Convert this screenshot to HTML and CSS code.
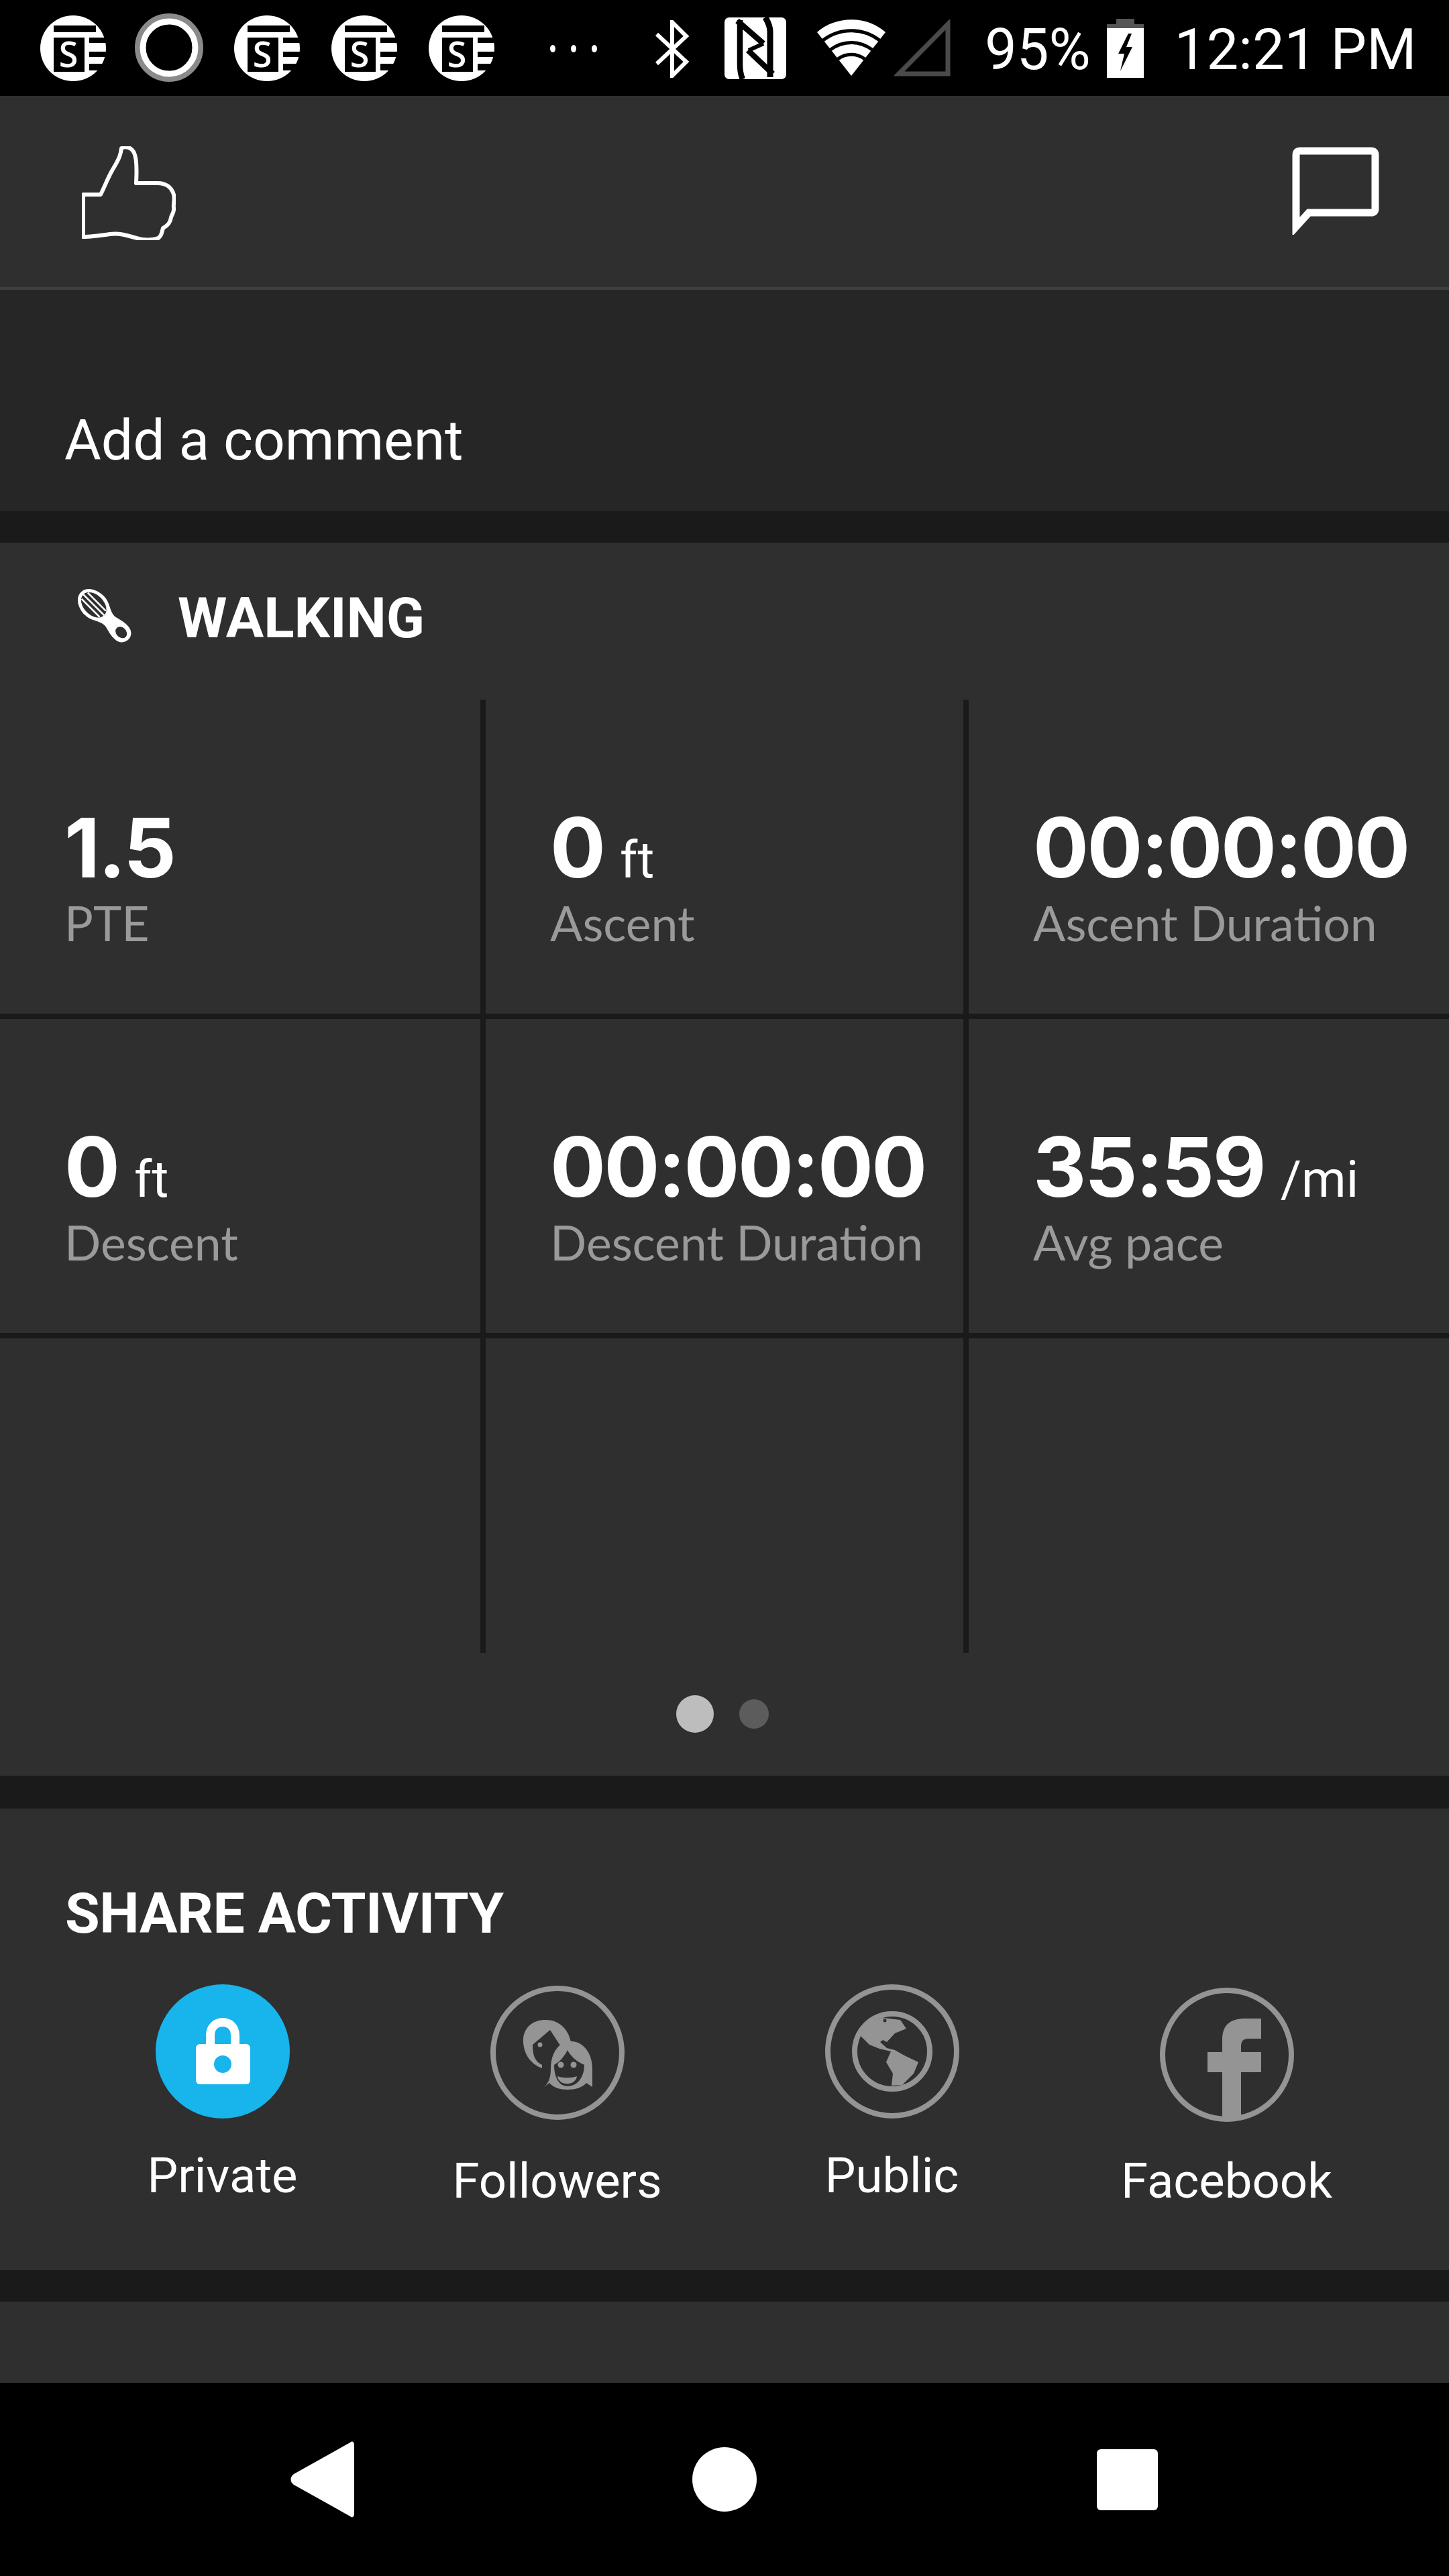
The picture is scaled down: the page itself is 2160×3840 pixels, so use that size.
FILE: index.html
```html
<!DOCTYPE html>
<html lang="en">
<head>
  <meta charset="UTF-8">
  <title>Activity</title>
  <link rel="stylesheet" href="styles.css">
</head>
<body>
  <div class="phone">
    <div class="statusbar">
      <svg class="st-icon st-first" viewBox="0 0 98 98"><use href="#se"/></svg>
      <svg class="st-ring" viewBox="0 0 102 102"><circle cx="51" cy="51" r="47" fill="none" stroke="#8a8a8a" stroke-width="8"/><circle cx="51" cy="51" r="39" fill="none" stroke="#fff" stroke-width="9"/></svg>
      <svg class="st-icon st-a" viewBox="0 0 98 98"><use href="#se"/></svg>
      <svg class="st-icon st-b" viewBox="0 0 98 98"><use href="#se"/></svg>
      <svg class="st-icon st-b" viewBox="0 0 98 98"><use href="#se"/></svg>
      <div class="st-dots"><span></span><span></span><span></span></div>
      <svg class="st-bt" viewBox="0 0 52 86"><path d="M2 21 L46 62 L25 83 V3 L46 24 L2 65" fill="none" stroke="#fff" stroke-width="6"/></svg>
      <svg class="st-nfc" viewBox="0 0 92 92">
        <rect width="92" height="92" rx="7" fill="#fff"/>
        <g fill="none" stroke="#000">
          <path d="M23 4 V70 C23 78 24 85 27 92" stroke-width="8.5"/>
          <path d="M19 5 L58 39" stroke-width="8.5"/>
          <path d="M36 49 L58 39" stroke-width="6"/>
          <path d="M35 49 L72 84" stroke-width="8.5"/>
          <path d="M68 89 V21 C68 13 65 7 61 0" stroke-width="9"/>
        </g>
      </svg>
      <svg class="st-wifi" viewBox="0 0 102 84"><path d="M0 19 C28 -6 74 -6 102 19 L51 84 Z" fill="#fff"/><path d="M9 31 C34 12 68 12 93 31 M20 45 C39 31 63 31 82 45 M31 59 C43 50 59 50 71 59" fill="none" stroke="#000" stroke-width="5"/></svg>
      <svg class="st-signal" viewBox="0 0 84 85"><path d="M80 7 V81 H7 Z" fill="none" stroke="#4a4a4a" stroke-width="7"/></svg>
      <span class="st-pct">95%</span>
      <svg class="st-batt" viewBox="0 0 55 88"><rect x="14" width="27" height="12" fill="#555"/><rect y="8" width="55" height="8" fill="#555"/><rect y="14" width="55" height="74" fill="#fff"/><path d="M32 22 L17 52 H26 L20 78 L38 42 H29 L37 22 Z" fill="#000"/></svg>
      <span class="st-time">12:21 PM</span>
    </div>

    <div class="actions">
      <svg class="thumb" viewBox="0 0 140 140"><path d="M2 72 H28 C36 56 40 44 47 33 C56 18 58 12 59 3 C66 -1 74 2 78 10 C82 18 82 36 81 55 H113 C126 55 134 62 137 72 C139 80 136 86 137 92 C138 98 134 102 133 106 C132 114 128 118 121 122 C119 130 118 134 114 137 C104 140 92 140 82 137 C68 133 56 129 42 131 C28 133 14 135 2 135 Z" fill="none" stroke="#fff" stroke-width="6" stroke-linejoin="round"/></svg>
      <svg class="bubble" viewBox="0 0 132 132"><path d="M7 120 V13 C7 9 9 7 13 7 H119 C123 7 125 9 125 13 V93 C125 97 123 99 119 99 H26 Z" fill="none" stroke="#fff" stroke-width="11"/></svg>
    </div>

    <div class="comment">Add a comment</div>

    <section class="card stats">
      <div class="activity">
        <svg class="foot" viewBox="0 0 72 72">
          <g transform="rotate(-45 36 36)">
            <path d="M36 -14 C49 -14 56 1 56 14 C56 28 47 34 46 46 C46 52 50 58 50 70 C50 80 44 86 36 86 C28 86 22 80 22 70 C22 58 26 52 26 46 C25 34 16 28 16 14 C16 1 23 -14 36 -14 Z" fill="#fff"/>
            <ellipse cx="36" cy="13" rx="15" ry="22" fill="#2f2f2f"/>
            <path d="M29.5 -6 V32 M36 -9 V35 M42.5 -6 V32" stroke="#fff" stroke-width="2.6" fill="none"/>
            <ellipse cx="36" cy="71" rx="7.5" ry="9.5" fill="#2f2f2f"/>
          </g>
        </svg>
        <span>WALKING</span>
      </div>
      <div class="grid">
        <div class="cell"><div class="val">1.5</div><div class="lbl">PTE</div></div>
        <div class="cell"><div class="val">0 <small>ft</small></div><div class="lbl">Ascent</div></div>
        <div class="cell cell-last"><div class="val">00:00:00</div><div class="lbl">Ascent Duration</div></div>
        <div class="cell"><div class="val">0 <small>ft</small></div><div class="lbl">Descent</div></div>
        <div class="cell"><div class="val">00:00:00</div><div class="lbl">Descent Duration</div></div>
        <div class="cell cell-last"><div class="val">35:59 <small>/mi</small></div><div class="lbl">Avg pace</div></div>
        <div class="cell cell-bottom"></div>
        <div class="cell cell-bottom"></div>
        <div class="cell cell-last cell-bottom"></div>
      </div>
      <div class="pager"><span class="dot dot-on"></span><span class="dot"></span></div>
    </section>

    <section class="card share">
      <h2>SHARE ACTIVITY</h2>
      <div class="share-row">
        <div class="share-item">
          <svg class="share-icon" viewBox="0 0 200 200">
            <circle cx="100" cy="100" r="100" fill="#18b4ec"/>
            <path d="M81.5 92 V76 C81.5 50 118.5 50 118.5 76 V92" fill="none" stroke="#fff" stroke-width="13"/>
            <rect x="60" y="89" width="81" height="60" rx="6" fill="#fff"/>
            <circle cx="100" cy="119" r="13" fill="#18b4ec"/>
          </svg>
          <div class="share-label">Private</div>
        </div>
        <div class="share-item share-item-low">
          <svg class="share-icon" viewBox="0 0 200 200">
            <circle cx="100" cy="100" r="96" fill="none" stroke="#949494" stroke-width="8"/>
            <path d="M49 84 C48 62 64 51 82 51 C102 51 116 64 120 84 L106 92 L89 66 L63 88 C63 96 64 104 67 109 C70 114 73 116 77 118 L77 123 C62 118 50 104 49 84 Z" fill="#949494"/>
            <circle cx="74" cy="88" r="3.5" fill="#949494"/>
            <path d="M80 151 C86 146 90 138 90 124 C90 100 102 83 120 83 C138 83 152 100 152 124 V151 L143 145 C137 152 126 155 115 155 C104 155 94 152 88 145 Z" fill="#949494"/>
            <path d="M95 118 C103 114 110 106 115 96 C120 106 130 114 140 118 C140 136 130 150 115 150 C102 150 95 136 95 118 Z" fill="#2f2f2f"/>
            <circle cx="105" cy="118" r="4.5" fill="#949494"/><circle cx="124" cy="118" r="4.5" fill="#949494"/>
            <path d="M100 135 C108 138 121 138 129 135 C127 150 102 150 100 135 Z" fill="#949494"/>
          </svg>
          <div class="share-label">Followers</div>
        </div>
        <div class="share-item">
          <svg class="share-icon" viewBox="0 0 200 200">
            <circle cx="100" cy="100" r="96" fill="none" stroke="#949494" stroke-width="8"/>
            <circle cx="100" cy="100" r="56" fill="none" stroke="#949494" stroke-width="8"/>
            <path d="M52 76 L64 56 L86 50 L112 53 L121 66 L104 73 L92 86 L86 83 L82 86 L92 95 L104 98 L118 106 L139 116 L132 133 L115 150 L99 151 L101 133 L91 116 L98 100 L81 96 L66 90 Z" fill="#949494"/>
            <circle cx="89" cy="54" r="2.5" fill="#2f2f2f"/>
          </svg>
          <div class="share-label">Public</div>
        </div>
        <div class="share-item share-item-lower">
          <svg class="share-icon" viewBox="0 0 200 200">
            <circle cx="100" cy="100" r="96" fill="none" stroke="#949494" stroke-width="8"/>
            <path d="M93 198 V126 H71 V96 H93 V78 C93 56 104 46 128 46 H151 V76 H132 C124 76 121 80 121 88 V96 H151 V126 H121 V198 Z" fill="#949494"/>
          </svg>
          <div class="share-label">Facebook</div>
        </div>
      </div>
    </section>

    <section class="card tail"></section>

    <nav class="navbar">
      <svg class="nav-back" viewBox="0 0 96 114"><path d="M96 6 C96 1 93 -1 90 2 L6 49 C0 53 0 61 6 65 L90 112 C93 115 96 113 96 108 Z" fill="#fff"/></svg>
      <span class="nav-home"></span>
      <span class="nav-recent"></span>
    </nav>
  </div>

  <svg class="defs" width="0" height="0">
    <defs>
      <symbol id="se" viewBox="0 0 98 98">
        <circle cx="49" cy="49" r="49" fill="#fff"/>
        <rect x="20" y="15" width="63" height="10" fill="#000"/>
        <rect x="20" y="33" width="46" height="51" fill="#000"/>
        <rect x="73" y="33" width="25" height="8" fill="#000"/>
        <rect x="73" y="54" width="25" height="8" fill="#000"/>
        <rect x="73" y="72" width="25" height="10" fill="#000"/>
        <text x="42" y="77" class="se-s">S</text>
      </symbol>
    </defs>
  </svg>
</body>
</html>
```

FILE: styles.css
```css
* { box-sizing: border-box; }
html, body { margin: 0; padding: 0; background: #000; }
body { font-family: Roboto, sans-serif; color: #fff; }
.phone { width: 2160px; height: 3840px; display: flex; flex-direction: column; background: #1a1a1a; overflow: hidden; }
.defs { position: absolute; }

/* status bar */
.statusbar { height: 143px; flex: none; background: #000; display: flex; align-items: flex-start; }
.statusbar svg { display: block; flex: none; }
.st-icon { width: 98px; height: 98px; margin-top: 23px; }
.st-first { margin-left: 60px; }
.st-ring { width: 102px; height: 102px; margin: 20px 0 0 43px; }
.st-a { margin-left: 46px; }
.st-b { margin-left: 47px; }
.se-s { font-family: "Open Sans", sans-serif; font-weight: 600; font-size: 52px; text-anchor: middle; fill: #fff; }
.st-dots { display: flex; gap: 23px; margin: 67px 0 0 83px; }
.st-dots span { width: 8px; height: 11px; border-radius: 50%; background: #fff; }
.st-bt { width: 52px; height: 86px; margin: 30px 0 0 87px; }
.st-nfc { width: 92px; height: 92px; margin: 26px 0 0 51px; }
.st-wifi { width: 102px; height: 84px; margin: 29px 0 0 46px; }
.st-signal { width: 84px; height: 85px; margin: 29px 0 0 13px; }
.st-pct, .st-time { font-size: 85px; line-height: 98px; margin-top: 25px; }
.st-pct { margin-left: 51px; }
.st-batt { width: 55px; height: 88px; margin: 28px 0 0 24px; }
.st-time { margin-left: 46px; }

/* like + comment row */
.actions { height: 289px; flex: none; background: #2f2f2f; border-bottom: 4px solid #3f3f3f; display: flex; justify-content: space-between; padding: 75px 103px 0 122px; }
.thumb { width: 140px; height: 140px; }
.bubble { width: 132px; height: 132px; }

.comment { height: 330px; flex: none; background: #262626; font-size: 84px; padding: 175px 0 0 96px; line-height: 100px; }

.card { background: #2f2f2f; flex: none; }

/* stats card */
.stats { margin-top: 47px; height: 1838px; }
.activity { display: flex; align-items: center; height: 234px; padding: 0 0 10px 120px; font-weight: 700; font-size: 84px; }
.foot { width: 72px; height: 72px; margin: 0 73px 6px 0; overflow: visible; }
.grid { display: grid; grid-template-columns: 724px 720px 716px; grid-template-rows: 476px 476px 469px; }
.cell { border-right: 8px solid #1a1a1a; border-bottom: 8px solid #1a1a1a; padding: 161px 0 0 96px; }
.cell-last { border-right: 0; }
.cell-bottom { border-bottom: 0; }
.val { font-family: Inter, sans-serif; font-weight: 700; font-size: 123px; line-height: 120px; height: 120px; letter-spacing: -2.5px; white-space: nowrap; }
.val small { font-family: Roboto, sans-serif; font-weight: 400; font-size: 76px; line-height: 1; letter-spacing: 0; margin-left: -3px; }
.lbl { font-family: Lato, sans-serif; font-size: 71.5px; color: #9a9a9a; line-height: 80px; margin-top: 11px; white-space: nowrap; }
.pager { display: flex; justify-content: center; align-items: center; gap: 38px; margin-top: 63px; padding-right: 7px; }
.dot { width: 44px; height: 44px; border-radius: 50%; background: #5c5c5c; }
.dot-on { width: 56px; height: 56px; background: #bdbdbd; }

/* share card */
.share { margin-top: 49px; height: 688px; padding: 107px 82px 0; }
.share h2 { margin: 0; font-size: 84px; line-height: 100px; font-weight: 700; letter-spacing: -0.4px; padding-left: 15px; }
.share-row { display: flex; margin-top: 55px; }
.share-item { width: 499px; display: flex; flex-direction: column; align-items: center; }
.share-item-low { margin-top: 2px; }
.share-item-lower { margin-top: 5px; }
.share-icon { width: 200px; height: 200px; display: block; }
.share-label { font-size: 72.5px; line-height: 84px; margin-top: 44px; white-space: nowrap; }
.share-item-low .share-label { margin-top: 50px; }
.share-item-lower .share-label { margin-top: 47px; }

.tail { margin-top: 47px; height: 121px; }

/* nav bar */
.navbar { flex: 1; background: #000; display: flex; align-items: center; padding-left: 432px; }
.nav-back { width: 96px; height: 114px; }
.nav-home { width: 96px; height: 96px; margin-left: 504px; border-radius: 50%; background: #fff; }
.nav-recent { width: 91px; height: 91px; margin-left: 507px; border-radius: 6px; background: #fff; }
```
